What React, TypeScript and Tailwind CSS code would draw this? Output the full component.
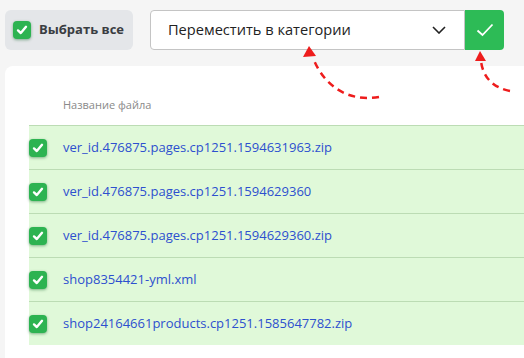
import React from "react";

const files = [
  "ver_id.476875.pages.cp1251.1594631963.zip",
  "ver_id.476875.pages.cp1251.1594629360",
  "ver_id.476875.pages.cp1251.1594629360.zip",
  "shop8354421-yml.xml",
  "shop24164661products.cp1251.1585647782.zip",
];

const CheckBox = () => (
  <span className="flex h-[18px] w-[18px] shrink-0 items-center justify-center rounded-[4px] bg-[#2db351] shadow-[0_1px_3px_rgba(0,90,30,0.45)]">
    <svg width="12" height="12" viewBox="0 0 12 12" fill="none">
      <path d="M2 6.4 L4.8 9 L10 2.8" stroke="white" strokeWidth="2.4" strokeLinecap="round" strokeLinejoin="round" />
    </svg>
  </span>
);

const App = () => {
  return (
    <div className="relative h-[358px] w-[524px] overflow-hidden bg-[#f5f5f5] font-['Open_Sans','Noto_Sans',sans-serif]">
      <div className="flex h-[66px] items-start gap-[17px] pl-[5px] pt-[10px]">
        <button className="flex h-10 w-[128px] items-center gap-[8px] rounded-[6px] bg-[#e4e6e9] pl-[8px]">
          <CheckBox />
          <span className="text-[13px] font-bold text-[#3a3d42]">Выбрать все</span>
        </button>
        <div className="flex h-10">
          <div className="flex w-[315px] items-center justify-between rounded-l-[4px] border border-[#c4c4c4] bg-white pl-[17px] pr-[18px]">
            <span className="text-[14.6px] text-[#222]">Переместить в категории</span>
            <svg width="14" height="8" viewBox="0 0 14 8" fill="none">
              <path d="M1 1 L7 7 L13 1" stroke="#222" strokeWidth="1.6" />
            </svg>
          </div>
          <div className="flex w-[39px] items-center justify-center rounded-r-[4px] bg-[#2dbb56]">
            <svg width="18" height="14" viewBox="0 0 18 14" fill="none">
              <path d="M1.5 7.5 L6.5 12 L16.5 1.5" stroke="white" strokeWidth="1.8" />
            </svg>
          </div>
        </div>
      </div>

      <div className="ml-[5px] h-[300px] rounded-tl-[8px] bg-white pl-[24px] pt-[31px]">
        <div className="h-[28px] pl-[34px] text-[11px] leading-[16px] text-[#8a8a8a]">Название файла</div>
        <div className="bg-[#e0f9d9]">
          {files.map((f) => (
            <div key={f} className="flex h-[44px] items-center gap-[16px] border-t border-[#bcdcb4]">
              <CheckBox />
              <span className="text-[13px] text-[#2d50cf]">{f}</span>
            </div>
          ))}
        </div>
      </div>

      <svg className="pointer-events-none absolute left-0 top-0" width="524" height="358" viewBox="0 0 524 358" fill="none">
        <path d="M379 97 C350 102 325 88 313 58" stroke="#ee1c1c" strokeWidth="2.5" strokeDasharray="7 5" />
        <path d="M309 46 L303 57 L316 56 Z" fill="#ee1c1c" />
        <path d="M510 91 C494 88 483 78 481 61" stroke="#ee1c1c" strokeWidth="2.5" strokeDasharray="7 5" />
        <path d="M480 51 L475 61 L486 61 Z" fill="#ee1c1c" />
      </svg>
    </div>
  );
};

export default App;
